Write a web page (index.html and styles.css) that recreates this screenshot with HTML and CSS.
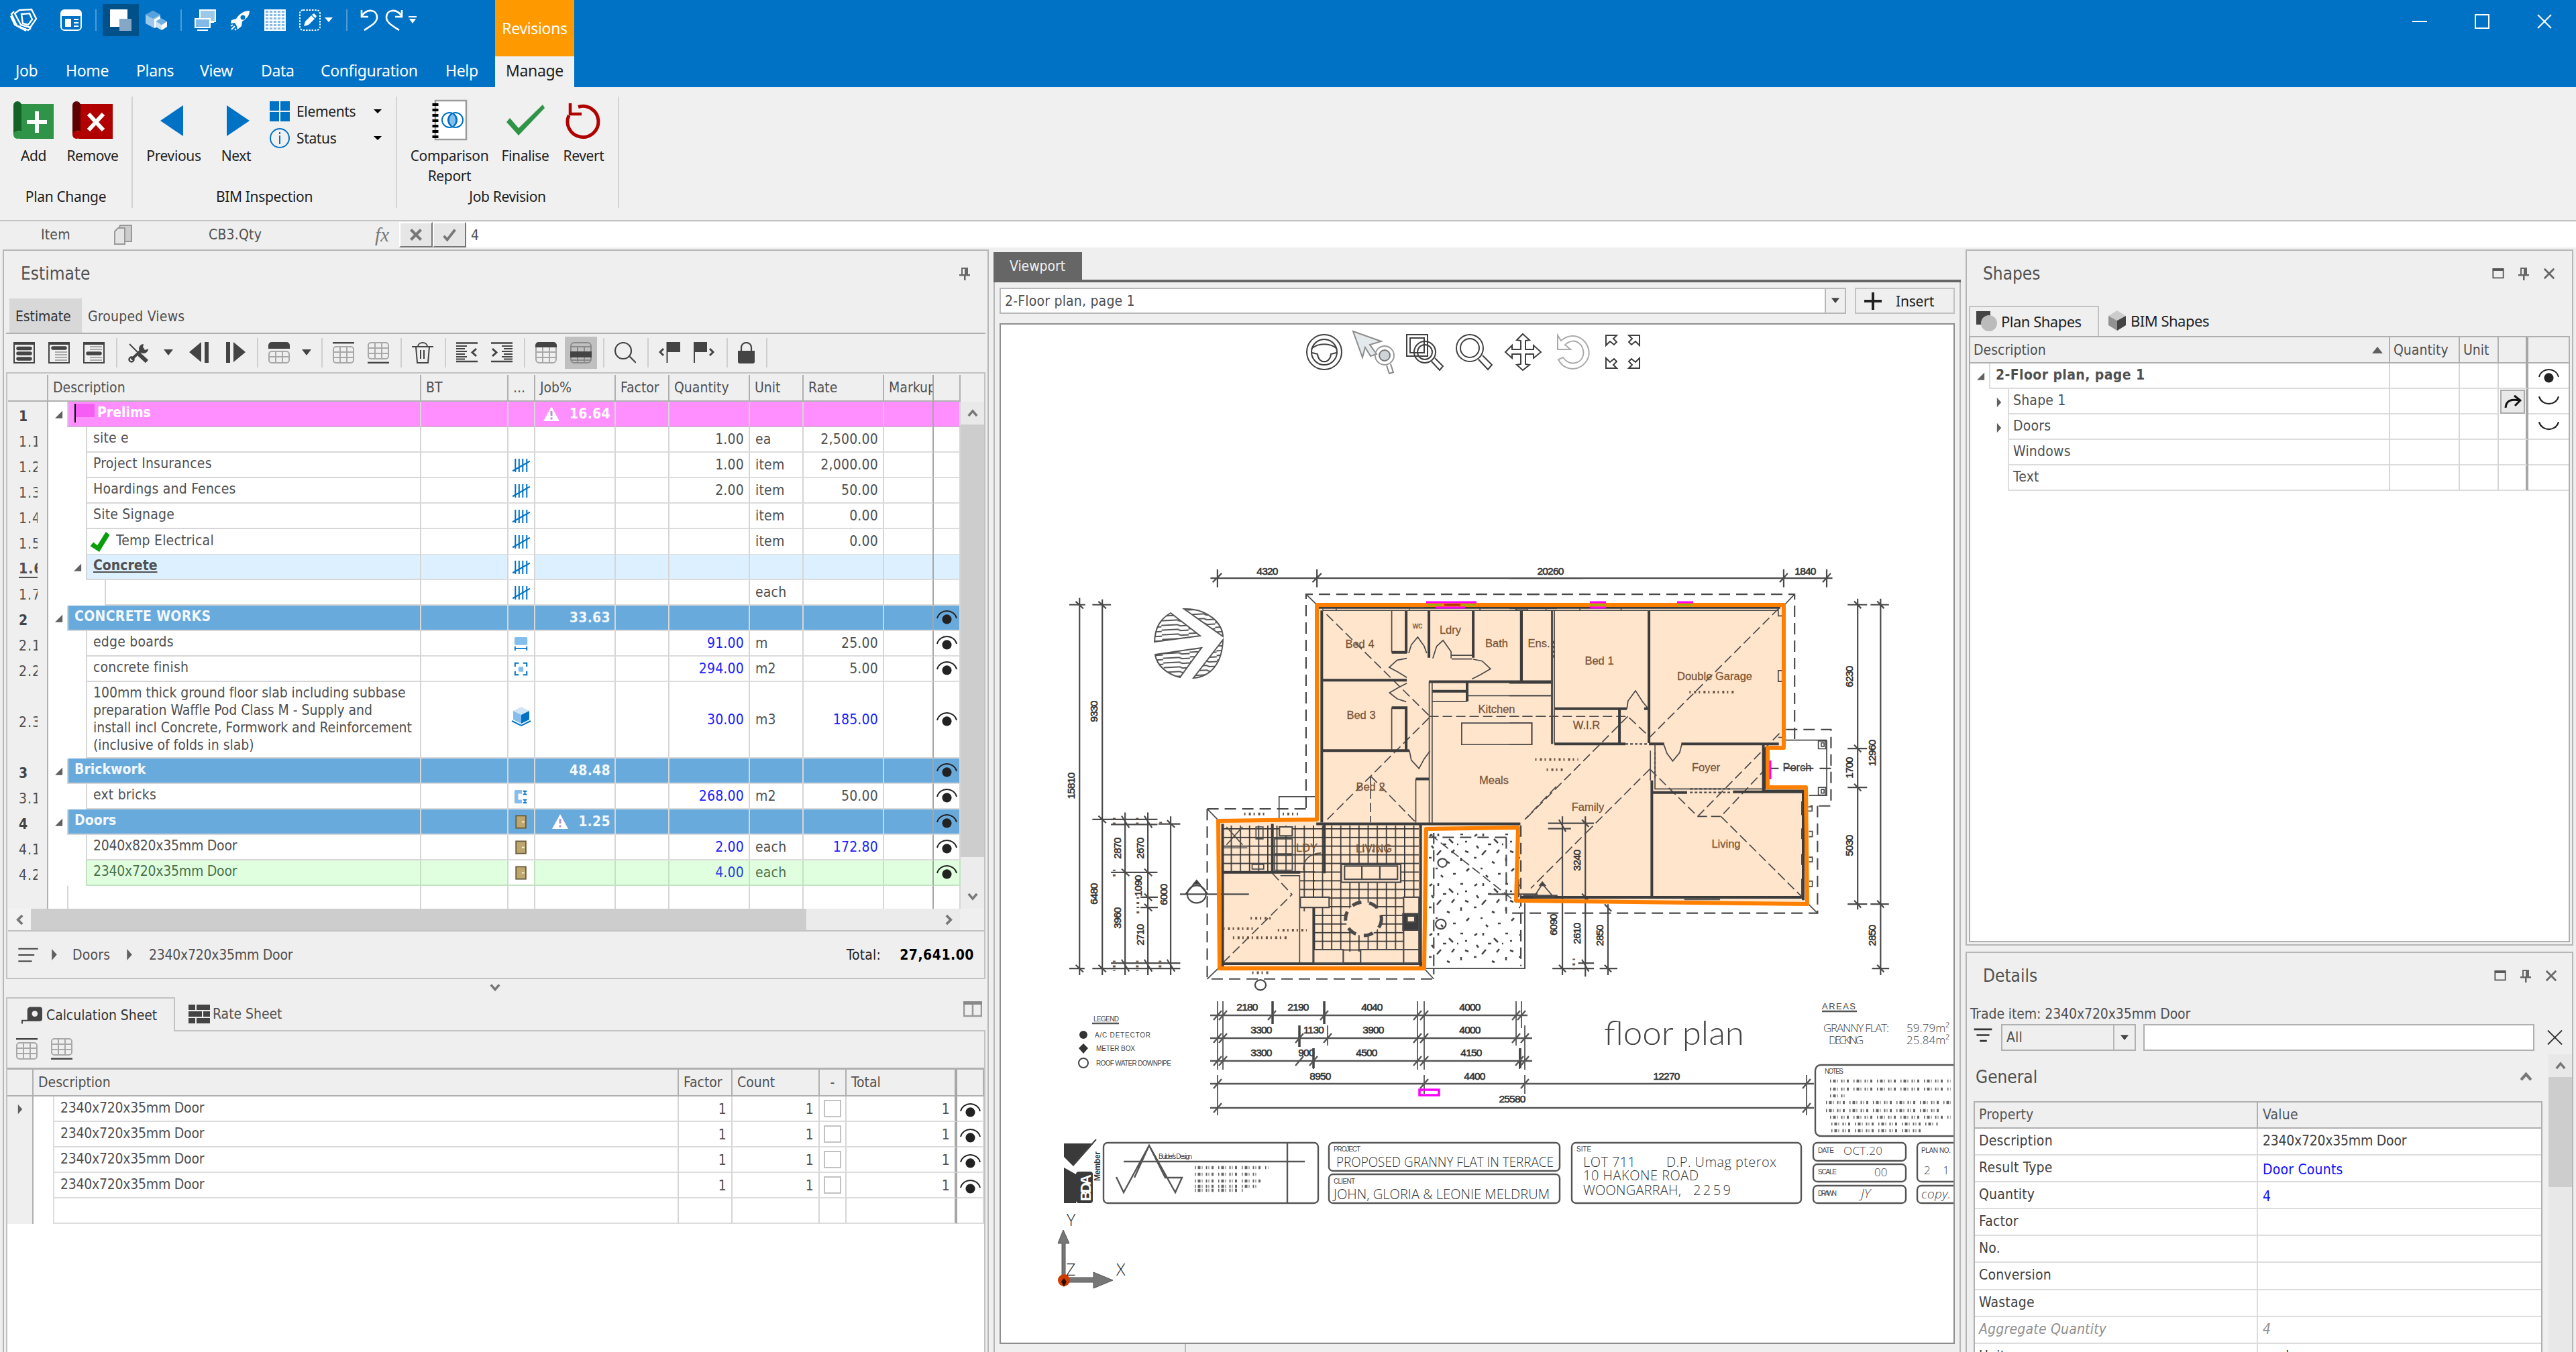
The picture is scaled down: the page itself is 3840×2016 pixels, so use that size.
FILE: index.html
```html
<!DOCTYPE html>
<html lang="en">
<head>
<meta charset="utf-8">
<title>Estimate</title>
<link rel="stylesheet" href="styles.css">
</head>
<body>
<svg class="defs" aria-hidden="true">
  <symbol id="eye" viewBox="0 0 32 21"><path d="M1 12C5-3 27-3 31 12" fill="none" stroke="#222" stroke-width="2"/><circle cx="16" cy="13.500" r="7.300" fill="#222"/></symbol>
  <symbol id="shut" viewBox="0 0 32 21"><path d="M1 3C5 18 27 18 31 3" fill="none" stroke="#222" stroke-width="2.400"/></symbol>
  <symbol id="tally" viewBox="0 0 30 24"><path d="M5.500 1v22M11.500 1v22M17.500 1v22M24 1v22M1 21L29 5" fill="none" stroke="#0072c6" stroke-width="2.200"/></symbol>
  <symbol id="linear" viewBox="0 0 24 24"><rect x="1" y="1" width="21" height="13" rx="2" fill="#83beec"/><path d="M2 16v7M21 16v7M2 19.500h19" stroke="#0072c6" stroke-width="2" fill="none"/></symbol>
  <symbol id="area" viewBox="0 0 24 24"><rect x="7.500" y="8" width="8" height="8" rx="1.500" fill="#83beec"/><path d="M2 8V2h6M15 2h6v6M21 15v6h-6M8 21H2v-6" stroke="#0072c6" stroke-width="2.200" fill="none"/></symbol>
  <symbol id="volume" viewBox="0 0 30 30"><path d="M15 0l12 6-12 6L3 6z" fill="#cfe5f6"/><path d="M3 6l12 6v13L3 19z" fill="#83beec"/><path d="M27 6l-12 6v13l12-6z" fill="#0072c6"/><path d="M1 21l14 7 14-7" fill="none" stroke="#0072c6" stroke-width="2"/></symbol>
  <symbol id="wall" viewBox="0 0 24 24"><path d="M3 1h10v6H7v10h6v6H3a2 2 0 01-2-2V3a2 2 0 012-2z" fill="#83beec"/><path d="M15 3h6M15 8h6M18 3v5M15 17h6M15 22h6M18 17v5" stroke="#0072c6" stroke-width="2" fill="none"/></symbol>
  <symbol id="door" viewBox="0 0 20 24"><rect x="1.500" y="1.500" width="16" height="20" fill="#bda76f" stroke="#6b5d3c" stroke-width="2"/><path d="M11 11.500h4" stroke="#fffbd0" stroke-width="2"/></symbol>
  <symbol id="warn" viewBox="0 0 26 24"><path d="M13 1l12 22H1z" fill="#fff"/><path d="M13 8v7M13 17.500v3" stroke="#b78fd0" stroke-width="3"/></symbol>
  <symbol id="open" viewBox="0 0 14 14"><path d="M13 0v13H0z" fill="#606060"/></symbol>
  <symbol id="fold" viewBox="0 0 10 18"><path d="M1 0l8 9-8 9z" fill="#606060"/></symbol>
  <symbol id="drop" viewBox="0 0 16 10"><path d="M1 0h14L8 9z" fill="#444"/></symbol>
  <symbol id="pin" viewBox="0 0 18 20"><path d="M4 1h10v10h3v2.500H1V11h3zM8 13h2.500v7H8z" fill="#666"/><path d="M6 3h3v8H6z" fill="#efefef"/></symbol>
  <symbol id="max" viewBox="0 0 20 20"><path d="M1.500 2h17v15h-17z" fill="none" stroke="#555" stroke-width="2"/><path d="M1 3.500h18" stroke="#555" stroke-width="4"/></symbol>
  <symbol id="cross" viewBox="0 0 20 20"><path d="M2 2l16 16M18 2L2 18" stroke="#666" stroke-width="3"/></symbol>
  <symbol id="up" viewBox="0 0 18 14"><path d="M2 11l7-8 7 8" fill="none" stroke="#777" stroke-width="4"/></symbol>
  <symbol id="down" viewBox="0 0 18 14"><path d="M2 3l7 8 7-8" fill="none" stroke="#777" stroke-width="4"/></symbol>
  <symbol id="top-row" viewBox="0 0 32 32"><path d="M0 1.200h32" stroke="#444" stroke-width="2.400"/><rect x="1" y="7" width="30" height="24" rx="4" fill="none" stroke="#a8a8a8" stroke-width="2"/><path d="M11 7v24M21 7v24M1 15h30M1 23h30" stroke="#a8a8a8" stroke-width="2"/></symbol>
  <symbol id="end-row" viewBox="0 0 32 32"><path d="M0 30.800h32" stroke="#444" stroke-width="2.400"/><rect x="1" y="1" width="30" height="24" rx="4" fill="none" stroke="#a8a8a8" stroke-width="2"/><path d="M11 1v24M21 1v24M1 9h30M1 17h30" stroke="#a8a8a8" stroke-width="2"/></symbol>
  <symbol id="outdent" viewBox="0 0 32 32"><path d="M0 1.500h32M0 29h32" stroke="#444" stroke-width="2.400"/><path d="M0 6h16M0 10h13M0 14h16M0 18h13M0 22h16M0 25.500h13" stroke="#444" stroke-width="1.800"/><path d="M30 10l-6 5.500 6 5.500" fill="none" stroke="#444" stroke-width="3"/></symbol>
</svg>

<header class="titlebar">
  <div class="bar-left">
    <div class="qat">
      <svg class="logo" viewBox="0 0 42 36" fill="none" stroke="#fff"><path d="M15 3l18-1 7 14-9 13-14-4L8 8z" stroke-width="2.400"/><path d="M18 9l12-1 4 9-6 8-8-2z" stroke-width="2.400"/><path d="M7 5L3 9l8 17 17 7 4-3M2 12l6 13 17 9" stroke-width="2.400"/></svg>
      <svg class="q home" viewBox="0 0 32 32"><rect x="1" y="1" width="30" height="30" rx="5" fill="none" stroke="#fff" stroke-width="2"/><path d="M1 9V6a5 5 0 015-5h20a5 5 0 015 5v4H1zM7 14h9v12H7zM20 14h7v2h-7zM20 19h7v2h-7zM20 24h7v2h-7z" fill="#fff"/></svg>
      <span class="qsep"></span>
      <span class="active"><svg viewBox="0 0 32 32"><path d="M0 0h26v26H0z" fill="#fff"/><path d="M14 14h18v18H14z" fill="#85a6c4"/></svg></span>
      <svg class="q cubes" viewBox="0 0 32 32"><path d="M11 2l11 6v7l-9 4v9L0 21V8z" fill="#9cc8ea"/><path d="M11 2l11 6-11 6L0 8z" fill="#58a1db"/><path d="M22 10l-9 5v13l9-4z" fill="#fff"/><path d="M23 13l9 5-8 5-9-5z" fill="#6fb1e3"/><path d="M15 18l9 5v8l-9-5z" fill="#cbe2f5"/><path d="M32 18l-8 5v8l8-5z" fill="#fff"/></svg>
      <span class="qsep"></span>
      <svg class="q" viewBox="0 0 32 32"><rect x="8" y="1" width="23" height="17" fill="#9cc8ea" stroke="#fff" stroke-width="2"/><rect x="1" y="14" width="22" height="13" fill="#83b9e6" stroke="#fff" stroke-width="2"/><path d="M4 31h16M24 19h5" stroke="#fff" stroke-width="2"/></svg>
      <svg class="q rocket" viewBox="0 0 32 32"><path d="M30 2c-10 0-16 6-20 12l-7 2-1 5 6-1 3 5 1 5 6-5 1-7c6-4 11-8 11-16z" fill="#fff"/><circle cx="20" cy="12" r="3.500" fill="#0072c6"/><path d="M2 25l3-2M3 30l5-5M8 31l2-2" stroke="#fff" stroke-width="2"/></svg>
      <svg class="q" viewBox="0 0 32 32"><path d="M0 0h32v32H0z" fill="#85bbe8"/><path d="M1 1h30v30H1zM7 1v30M13 1v30M19 1v30M25 1v30M1 6h30M1 11h30M1 16h30M1 21h30M1 26h30" fill="none" stroke="#fff" stroke-width="1.800"/></svg>
      <svg class="q" viewBox="0 0 32 32"><rect x="1" y="1" width="30" height="30" rx="5" fill="none" stroke="#fff" stroke-width="2" stroke-dasharray="2.500 1.800"/><path d="M7 25l2-7 9-9 5 5-9 9zM19 8l3-2 4 4-2 3z" fill="#fff"/></svg>
      <svg class="qdrop" viewBox="0 0 12 8"><path d="M0 0h12L6 7z" fill="#fff"/></svg>
      <span class="qsep"></span>
      <svg class="q undo" viewBox="0 0 28 32"><path d="M2 1v10h10M2 10C10-2 25 0 25 12c0 8-10 13-19 19" fill="none" stroke="#fff" stroke-width="2.600"/></svg>
      <svg class="q redo" viewBox="0 0 28 32"><path d="M26 1v10H16M26 10C18-2 3 0 3 12c0 8 10 13 19 19" fill="none" stroke="#fff" stroke-width="2.600"/></svg>
      <svg class="qdrop" viewBox="0 0 12 12"><path d="M0 0h12v2H0zM1 4h10L6 11z" fill="#fff"/></svg>
    </div>
    <nav class="menu"><span>Job</span><span>Home</span><span>Plans</span><span>View</span><span>Data</span><span>Configuration</span><span>Help</span></nav>
  </div>
  <div class="context"><span class="ctx-name">Revisions</span><span class="ctx-tab">Manage</span></div>
  <div class="winctl">
    <svg viewBox="0 0 22 22"><path d="M0 11h22" stroke="#fff" stroke-width="2"/></svg>
    <svg viewBox="0 0 22 22"><path d="M1 1h20v20H1z" fill="none" stroke="#fff" stroke-width="2"/></svg>
    <svg viewBox="0 0 22 22"><path d="M1 1l20 20M21 1L1 21" stroke="#fff" stroke-width="2"/></svg>
  </div>
</header>

<section class="ribbon">
  <div class="group g1">
    <div class="tools">
      <div class="big"><svg viewBox="0 0 60 56"><path d="M9 4h51v52H9z" fill="#2f9348"/><path d="M0 6a6 6 0 0112 0v38H9c-4 0-6 3-6 6L0 50z" fill="#136327"/><circle cx="6" cy="50" r="6" fill="#2f9348"/><path d="M20 31h30M35 15v32" stroke="#fff" stroke-width="6"/></svg><span>Add</span></div>
      <div class="big"><svg viewBox="0 0 60 56"><path d="M9 4h51v52H9z" fill="#b00000"/><path d="M0 6a6 6 0 0112 0v38H9c-4 0-6 3-6 6L0 50z" fill="#5c0000"/><circle cx="6" cy="50" r="6" fill="#b00000"/><path d="M24 19l22 24M46 19L24 43" stroke="#fff" stroke-width="6"/></svg><span>Remove</span></div>
    </div>
    <div class="caption">Plan Change</div>
  </div>
  <div class="group g2">
    <div class="tools">
      <div class="big"><svg viewBox="0 0 60 56"><path d="M44 6v46L10 29z" fill="#0072c6"/></svg><span>Previous</span></div>
      <div class="big"><svg viewBox="0 0 60 56"><path d="M16 6v46l34-23z" fill="#0072c6"/></svg><span>Next</span></div>
      <div class="smalls">
        <div><svg viewBox="0 0 30 30"><path d="M0 0h14v14H0zM16 0h14v14H16zM0 16h14v14H0zM16 16h14v14H16z" fill="#0072c6"/></svg><span>Elements</span><svg class="dd" viewBox="0 0 12 7"><path d="M0 0h12L6 6z"/></svg></div>
        <div><svg viewBox="0 0 30 30"><circle cx="15" cy="15" r="14" fill="none" stroke="#0072c6" stroke-width="2"/><path d="M15 6v3M15 11v13" stroke="#0072c6" stroke-width="2"/></svg><span>Status</span><svg class="dd" viewBox="0 0 12 7"><path d="M0 0h12L6 6z"/></svg></div>
      </div>
    </div>
    <div class="caption">BIM Inspection</div>
  </div>
  <div class="group g3">
    <div class="tools">
      <div class="big"><svg viewBox="0 0 60 56"><rect x="9" y="-1" width="46" height="58" fill="#fff" stroke="#9b9b9b" stroke-width="2.500"/><path d="M9 3v53" stroke="#000" stroke-width="9" stroke-dasharray="4 4"/><circle cx="30" cy="28" r="11" fill="#fff" stroke="#0072c6" stroke-width="2"/><circle cx="39" cy="28" r="11" fill="none" stroke="#0072c6" stroke-width="2"/><path d="M34.500 18a12 12 0 010 20 12 12 0 010-20z" fill="#83beec" stroke="#0072c6" stroke-width="1.500"/></svg><span>Comparison<br>Report</span></div>
      <div class="big"><svg viewBox="0 0 60 56"><path d="M2 31l5-6 13 15L56 5l3 5-39 41z" fill="#2f9348"/></svg><span>Finalise</span></div>
      <div class="big"><svg viewBox="0 0 60 56"><path d="M8 21A23 23 0 1022 8.500" fill="none" stroke="#b00000" stroke-width="5"/><path d="M10 3v16h17" fill="none" stroke="#b00000" stroke-width="4.500"/></svg><span>Revert</span></div>
    </div>
    <div class="caption">Job Revision</div>
  </div>
</section>

<section class="formula">
  <span class="f-item">Item</span>
  <svg class="f-copy" viewBox="0 0 30 30"><path d="M10 1h17v24H15V8H7z" fill="#ccc" stroke="#999" stroke-width="2"/><path d="M2 10l5-5h10v24H2z" fill="#e4e4e4" stroke="#999" stroke-width="2"/></svg>
  <span class="f-ref">CB3.Qty</span>
  <span class="fx">fx</span>
  <span class="f-btn"><svg viewBox="0 0 24 24"><path d="M3 3l18 18M21 3L3 21" stroke="#777" stroke-width="5"/></svg></span>
  <span class="f-btn"><svg viewBox="0 0 24 24"><path d="M2 14l6 7L22 3" fill="none" stroke="#777" stroke-width="4.500"/></svg></span>
  <span class="f-in">4</span>
</section>

<main class="work">
  <section class="panel estimate">
    <div class="ptitle"><span>Estimate</span><svg class="pi"><use href="#pin"/></svg></div>
    <div class="etabs"><span class="on">Estimate</span><span>Grouped Views</span></div>
    <div class="etools">
      <svg viewBox="0 0 32 32"><path d="M1 1h30v30H1z" fill="none" stroke="#444" stroke-width="2"/><path d="M0 2h32" stroke="#444" stroke-width="4"/><path d="M7 9.500h18M7 17h18M7 25h18" stroke="#444" stroke-width="5.500" stroke-linecap="round"/></svg>
      <svg viewBox="0 0 32 32"><path d="M1 1h30v30H1z" fill="none" stroke="#444" stroke-width="2"/><path d="M0 2h32" stroke="#444" stroke-width="4"/><path d="M7 9h18" stroke="#444" stroke-width="5.500" stroke-linecap="round"/><path d="M10 15h18M10 19h18M10 23h18M10 27h18" stroke="#aaa" stroke-width="2"/></svg>
      <svg viewBox="0 0 32 32"><path d="M1 1h30v30H1z" fill="none" stroke="#444" stroke-width="2"/><path d="M0 2h32" stroke="#444" stroke-width="4"/><path d="M7 17h18" stroke="#444" stroke-width="5.500" stroke-linecap="round"/><path d="M10 7h18M10 11h18M10 23h18M10 27h18" stroke="#aaa" stroke-width="2"/></svg>
      <i class="sep"></i>
      <svg viewBox="0 0 32 32"><path d="M3 3l14 14" stroke="#444" stroke-width="2"/><path d="M17 18l12 11" stroke="#444" stroke-width="6"/><path d="M6 26L24 9" stroke="#444" stroke-width="4"/><circle cx="6" cy="26" r="3.500" fill="none" stroke="#444" stroke-width="2.500"/><path d="M24 3a7 7 0 107 7l-5 2-3-4z" fill="#444"/></svg>
      <svg class="arr"><use href="#drop"/></svg>
      <svg viewBox="0 0 32 32"><path d="M18 0v30L0 15zM23 0h6v31h-6z" fill="#444"/></svg>
      <svg viewBox="0 0 32 32"><path d="M14 0v30l18-15zM3 0h6v31H3z" fill="#444"/></svg>
      <i class="sep"></i>
      <svg viewBox="0 0 32 32"><path d="M0 10V5a5 5 0 015-5h22a5 5 0 015 5v5z" fill="#444"/><rect x="1" y="14" width="30" height="17" rx="4" fill="none" stroke="#a8a8a8" stroke-width="2"/><path d="M11 14v17M21 14v17M1 22h30" stroke="#a8a8a8" stroke-width="2"/></svg>
      <svg class="arr tight"><use href="#drop"/></svg>
      <i class="sep"></i>
      <svg><use href="#top-row"/></svg>
      <svg><use href="#end-row"/></svg>
      <i class="sep"></i>
      <svg viewBox="0 0 32 32" fill="none" stroke="#444" stroke-width="2"><path d="M0 7h32M9 7c0-8 14-8 14 0M6 7l2 24h16l2-24M13 12v13M18 12v13"/></svg>
      <i class="sep"></i>
      <svg><use href="#outdent"/></svg>
      <svg viewBox="0 0 32 32"><path d="M0 1.500h32M0 29h32" stroke="#444" stroke-width="2.400"/><path d="M16 6h16M19 10h13M16 14h16M19 18h13M16 22h16M19 25.500h13" stroke="#444" stroke-width="1.800"/><path d="M2 10l6 5.500L2 21" fill="none" stroke="#444" stroke-width="3"/></svg>
      <i class="sep"></i>
      <svg viewBox="0 0 32 32"><rect x="1" y="1" width="30" height="30" rx="5" fill="none" stroke="#a8a8a8" stroke-width="2"/><path d="M11 7v24M21 7v24M1 15h30M1 23h30" stroke="#a8a8a8" stroke-width="2"/><path d="M0 8V5a5 5 0 015-5h22a5 5 0 015 5v3z" fill="#444"/></svg>
      <svg class="sel" viewBox="0 0 32 32"><rect x="1" y="1" width="30" height="30" rx="5" fill="none" stroke="#8a8a8a" stroke-width="2"/><path d="M11 7v24M21 7v24M1 7h30M1 27h30" stroke="#8a8a8a" stroke-width="2"/><path d="M0 14h32v9H0z" fill="#444"/></svg>
      <i class="sep"></i>
      <svg viewBox="0 0 32 32" fill="none" stroke="#444" stroke-width="2.200"><circle cx="13" cy="13" r="12"/><path d="M22 21l10 10"/></svg>
      <i class="sep"></i>
      <svg viewBox="0 0 32 32"><path d="M13 0h19v15H13zM11.500 0h2v31h-2z" fill="#444"/><path d="M7 10l-5 5 5 5" fill="none" stroke="#444" stroke-width="3"/></svg>
      <svg viewBox="0 0 32 32"><path d="M0 0h20v15H0zM0 0h2v31H0z" fill="#444"/><path d="M24 10l5 5-5 5" fill="none" stroke="#444" stroke-width="3"/></svg>
      <i class="sep"></i>
      <svg class="lock" viewBox="0 0 25 32"><path d="M0 13h25v16a3 3 0 01-3 3H3a3 3 0 01-3-3z" fill="#444"/><path d="M5 14V8a7.500 7 0 0115 0v6" fill="none" stroke="#444" stroke-width="2.200"/></svg>
      <i class="sep"></i>
    </div>
    <div class="ebox">
      <div class="egrid">
        <div class="rows">
          <div class="er head"><span></span><span>Description</span><span>BT</span><span>...</span><span>Job%</span><span>Factor</span><span>Quantity</span><span>Unit</span><span>Rate</span><span class="cut">Markup</span><span></span></div>
          <div class="er l0 pink"><b class="no"><s>1</s></b><span class="desc"><svg class="tog"><use href="#open"/></svg><b class="nm"><em class="caret"></em>Prelims</b></span><i></i><i></i><b class="job"><svg><use href="#warn"/></svg>16.64</b><i></i><i></i><i></i><i></i><i></i><i></i></div>
          <div class="er l1"><span class="no"><s>1.1</s></span><span class="desc"><span class="nm">site e</span></span><i></i><i></i><i></i><i></i><span class="n">1.00</span><span class="u">ea</span><span class="n">2,500.00</span><i></i><i></i></div>
          <div class="er l1"><span class="no"><s>1.2</s></span><span class="desc"><span class="nm">Project Insurances</span></span><i></i><i><svg class="ty"><use href="#tally"/></svg></i><i></i><i></i><span class="n">1.00</span><span class="u">item</span><span class="n">2,000.00</span><i></i><i></i></div>
          <div class="er l1"><span class="no"><s>1.3</s></span><span class="desc"><span class="nm">Hoardings and Fences</span></span><i></i><i><svg class="ty"><use href="#tally"/></svg></i><i></i><i></i><span class="n">2.00</span><span class="u">item</span><span class="n">50.00</span><i></i><i></i></div>
          <div class="er l1"><span class="no"><s>1.4</s></span><span class="desc"><span class="nm">Site Signage</span></span><i></i><i><svg class="ty"><use href="#tally"/></svg></i><i></i><i></i><i></i><span class="u">item</span><span class="n">0.00</span><i></i><i></i></div>
          <div class="er l1"><span class="no"><s>1.5</s></span><span class="desc"><span class="nm"><svg class="tick" viewBox="0 0 30 32"><path d="M0 22l5-6 6 5L24 0l6 5-16 26z" fill="#0a9e0a"/></svg>Temp Electrical</span></span><i></i><i><svg class="ty"><use href="#tally"/></svg></i><i></i><i></i><i></i><span class="u">item</span><span class="n">0.00</span><i></i><i></i></div>
          <div class="er l1 sky"><b class="no"><s class="ul">1.6</s></b><span class="desc"><svg class="tog"><use href="#open"/></svg><b class="nm"><u>Concrete</u></b></span><i></i><i class="white"><svg class="ty"><use href="#tally"/></svg></i><i></i><i></i><i></i><i></i><i></i><i></i><i></i></div>
          <div class="er l2"><span class="no"><s>1.7</s></span><span class="desc"><span class="nm"></span></span><i></i><i><svg class="ty"><use href="#tally"/></svg></i><i></i><i></i><i></i><span class="u">each</span><i></i><i></i><i></i></div>
          <div class="er l0 blue"><b class="no"><s>2</s></b><span class="desc"><svg class="tog"><use href="#open"/></svg><b class="nm caps">CONCRETE WORKS</b></span><i></i><i></i><b class="job">33.63</b><i></i><i></i><i></i><i></i><i></i><i><svg class="ey"><use href="#eye"/></svg></i></div>
          <div class="er l1"><span class="no"><s>2.1</s></span><span class="desc"><span class="nm">edge boards</span></span><i></i><i><svg class="ty"><use href="#linear"/></svg></i><i></i><i></i><span class="n lk">91.00</span><span class="u">m</span><span class="n">25.00</span><i></i><i><svg class="ey"><use href="#eye"/></svg></i></div>
          <div class="er l1"><span class="no"><s>2.2</s></span><span class="desc"><span class="nm">concrete finish</span></span><i></i><i><svg class="ty"><use href="#area"/></svg></i><i></i><i></i><span class="n lk">294.00</span><span class="u">m2</span><span class="n">5.00</span><i></i><i><svg class="ey"><use href="#eye"/></svg></i></div>
          <div class="er l1 tall"><span class="no"><s>2.3</s></span><span class="desc"><span class="nm">100mm thick ground floor slab including subbase<br>preparation Waffle Pod Class M - Supply and<br>install incl Concrete, Formwork and Reinforcement<br>(inclusive of folds in slab)</span></span><i></i><i><svg class="vol"><use href="#volume"/></svg></i><i></i><i></i><span class="n lk">30.00</span><span class="u">m3</span><span class="n lk">185.00</span><i></i><i><svg class="ey"><use href="#eye"/></svg></i></div>
          <div class="er l0 blue"><b class="no"><s>3</s></b><span class="desc"><svg class="tog"><use href="#open"/></svg><b class="nm">Brickwork</b></span><i></i><i></i><b class="job">48.48</b><i></i><i></i><i></i><i></i><i></i><i><svg class="ey"><use href="#eye"/></svg></i></div>
          <div class="er l1"><span class="no"><s>3.1</s></span><span class="desc"><span class="nm">ext bricks</span></span><i></i><i><svg class="ty"><use href="#wall"/></svg></i><i></i><i></i><span class="n lk">268.00</span><span class="u">m2</span><span class="n">50.00</span><i></i><i><svg class="ey"><use href="#eye"/></svg></i></div>
          <div class="er l0 blue"><b class="no"><s>4</s></b><span class="desc"><svg class="tog"><use href="#open"/></svg><b class="nm">Doors</b></span><i></i><i><svg class="ty"><use href="#door"/></svg></i><b class="job"><svg><use href="#warn"/></svg>1.25</b><i></i><i></i><i></i><i></i><i></i><i><svg class="ey"><use href="#eye"/></svg></i></div>
          <div class="er l1"><span class="no"><s>4.1</s></span><span class="desc"><span class="nm code">2040x820x35mm Door</span></span><i></i><i><svg class="ty"><use href="#door"/></svg></i><i></i><i></i><span class="n lk">2.00</span><span class="u">each</span><span class="n lk">172.80</span><i></i><i><svg class="ey"><use href="#eye"/></svg></i></div>
          <div class="er l1 green"><span class="no"><s>4.2</s></span><span class="desc"><span class="nm code">2340x720x35mm Door</span></span><i></i><i><svg class="ty"><use href="#door"/></svg></i><i></i><i></i><span class="n lk">4.00</span><span class="u">each</span><i></i><i></i><i><svg class="ey"><use href="#eye"/></svg></i></div>
          <div class="er l0 last"><span class="no"></span><span class="desc"><span class="nm"></span></span><i></i><i></i><i></i><i></i><i></i><i></i><i></i><i></i><i></i></div>
        </div>
        <div class="vscroll"><span class="btn"><svg><use href="#up"/></svg></span><span class="thumb"></span><span class="rest"><svg><use href="#down"/></svg></span></div>
      </div>
      <div class="hscroll"><span class="btn"><svg viewBox="0 0 14 18"><path d="M11 2L4 9l7 7" fill="none" stroke="#777" stroke-width="4"/></svg></span><span class="thumb"></span><span class="rest"><svg viewBox="0 0 14 18"><path d="M3 2l7 7-7 7" fill="none" stroke="#777" stroke-width="4"/></svg></span></div>
      <div class="crumbs">
        <svg class="burger" viewBox="0 0 32 24"><path d="M0 2h32M0 12h26M0 22h22" stroke="#444" stroke-width="2.200"/></svg>
        <svg class="cr"><use href="#fold"/></svg><span class="c1">Doors</span>
        <svg class="cr"><use href="#fold"/></svg><span class="c2 code">2340x720x35mm Door</span>
        <span class="tl">Total:</span><b>27,641.00</b>
      </div>
    </div>
    <div class="splitter"><svg><use href="#down"/></svg></div>
    <div class="ctabs">
      <span class="on"><svg viewBox="0 0 32 26"><path d="M14 0h14a4 4 0 014 4v14a4 4 0 01-4 4H2v4H0v-6h9V5a5 5 0 015-5z" fill="#444"/><circle cx="20.500" cy="10.500" r="4.500" fill="#efefef"/></svg>Calculation Sheet</span>
      <span class="off"><svg viewBox="0 0 32 28"><path d="M0 0h10v8H0zM12 0h20v8H12zM0 10h20v8H0zM22 10h10v8H22zM0 20h10v8H0zM12 20h20v8H12z" fill="#444"/></svg>Rate Sheet<svg class="lay" viewBox="0 0 28 24"><path d="M1 2h26v20H1zM14 4v18" fill="none" stroke="#999" stroke-width="2.500"/><path d="M0 2.500h28" stroke="#888" stroke-width="5"/></svg></span>
    </div>
    <div class="cbox">
      <div class="ctools"><svg><use href="#top-row"/></svg><svg><use href="#end-row"/></svg></div>
      <div class="cr-row chead"><span></span><span>Description</span><span>Factor</span><span>Count</span><span class="mid">-</span><span>Total</span><span></span></div>
      <div class="cr-row"><span class="lead"><svg><use href="#fold"/></svg></span><span class="d"><span>2340x720x35mm Door</span></span><span>1</span><span>1</span><span class="mid"><em></em></span><span>1</span><span class="ec"><svg class="ey"><use href="#eye"/></svg></span></div>
      <div class="cr-row"><span class="lead"></span><span class="d"><span>2340x720x35mm Door</span></span><span>1</span><span>1</span><span class="mid"><em></em></span><span>1</span><span class="ec"><svg class="ey"><use href="#eye"/></svg></span></div>
      <div class="cr-row"><span class="lead"></span><span class="d"><span>2340x720x35mm Door</span></span><span>1</span><span>1</span><span class="mid"><em></em></span><span>1</span><span class="ec"><svg class="ey"><use href="#eye"/></svg></span></div>
      <div class="cr-row"><span class="lead"></span><span class="d"><span>2340x720x35mm Door</span></span><span>1</span><span>1</span><span class="mid"><em></em></span><span>1</span><span class="ec"><svg class="ey"><use href="#eye"/></svg></span></div>
      <div class="cr-row"><span class="lead"></span><span class="d"><span></span></span><span></span><span></span><span></span><span></span><span></span></div>
      <div class="blank"></div>
    </div>
  </section>

  <section class="viewport">
    <div class="vtabs"><span>Viewport</span></div>
    <div class="vbody">
      <div class="vbar"><div class="combo"><span>2-Floor plan, page 1</span><i><svg><use href="#drop"/></svg></i></div><div class="insert"><svg viewBox="0 0 26 26"><path d="M13 0v26M0 13h26" stroke="#222" stroke-width="4"/></svg>Insert</div></div>
      <div class="canvas">
<svg viewBox="1492 485 1420 1518" class="plan">
  <defs>
    <pattern id="tile" x="1957" y="1236" width="13.600" height="12.900" patternUnits="userSpaceOnUse"><path d="M0 0h13.600M0 0v12.900" stroke="#333" stroke-width="3.400" fill="none"/></pattern>
    <pattern id="hatch" width="40" height="7" patternUnits="userSpaceOnUse" patternTransform="rotate(-3)"><path d="M0 1h24l4 2h12" stroke="#555" stroke-width="2" fill="none"/></pattern>
    <pattern id="gravel" x="2126" y="1240" width="67" height="74" patternUnits="userSpaceOnUse"><path d="M5 8l4-3M18 4v4M34 12l6 6M51 5h4M8 22l3 4M25 20h5M42 28l-4 5M4 40h4M16 36l6-7M31 46l4 2M52 40v5M14 56h3M58 16h3M46 20h2M60 60l4-4M40 64h4M22 66l3 3M58 30l5 2" stroke="#444" stroke-width="2.600" fill="none"/></pattern>
  </defs>
  <path d="M1963 903V1223L1816 1225 1818 1445H2123L2126 1237 2263 1235 2260 1344 2694 1349 2692 1175H2635V1116H2659V903Z" fill="#ffe5cc"/>
  <g fill="url(#tile)"><path d="M1824 1232h74v69h-74zM1898 1232h60v69h-60z"/><path d="M1957 1232h158v188h-158z"/><path d="M1938 1300h22v60h-22z"/></g>
  <path d="M2130 1244h136v196h-136z" fill="url(#gravel)"/>
  <g fill="url(#hatch)" stroke="#555" stroke-width="2"><path d="M1745 915L1789 949 1721 958C1722 938 1728 925 1745 915zM1765 909C1800 908 1822 930 1823 950zM1722 977L1791 967 1759 1011C1738 1006 1724 992 1722 977zM1823 955C1822 990 1805 1010 1779 1012z"/></g>
  <g class="ink" transform="translate(1570 830) scale(.4783 .4464)">
    <path d="M490 74H1650M512 45v60M822 45v60M497 88l28-30M808 88l28-30M82 140v1260M153 145v1255M50 163h50M122 163h58M50 1378h48M122 1378h60M122 880h60M70 152l24 24M141 152l24 24M70 1366l24 24M141 1366l24 24M141 868l24 24"/>
    <path d="M224 857v543M295 857v543M366 870v530M180 880h145M180 897h145M328 895h68M180 1057h145M272 1140h54M272 1174h54M180 1360h216M180 1378h216M213 868l24 40M284 868l24 40M355 883l24 24M213 1045l24 24M284 1045l24 24M284 1128l24 24M284 1162l24 24M213 1348l24 40M284 1348l24 40M355 1348l24 40"/>
    <path class="fine" d="M190 875v30M262 875v30M335 888v14M190 1048v22M264 1140v56M190 1352v34M262 1352v34M333 1352v30"/>
    <path class="dash" d="M1570 128H788V845M480 845H788M480 845V1413H1186V1378M1186 1370V925M1412 940H1170M1412 940V1195"/>
    <path class="thin" d="M788 128l34 35M480 845l32 35M480 1413l34-35M1186 1413l-30-35M704 880V804H822M1158 1378H1470V1160"/>
    <path class="dash thin" d="M852 195L1175 537 845 890M989 735L1130 890M989 735V890M1172 536H1570M530 1358L745 1130M683 1060l62 72M1175 930l260 220M1568 770L1470 880"/>
    <path class="wall" d="M822 172H1570M837 182V890M837 415H1102M837 650H1110M1100 182V325M1171 182V340M1309 182V340M1459 182V418M1171 420H1556M1290 420V486M1055 322H1102M1055 507H1100V650M1130 745h42M1180 452h108M820 895H1456M1145 895V1378M528 895V1375M520 1362H1150M683 895V1057M530 1057H770M845 895V1060M812 1170V1360"/>
    <path class="thin" d="M1055 182V322M1055 507V648M1130 745V893M1172 420V893M1181 420V893M1556 182V628M1290 467H1556M1181 486h108M1242 332h64M1242 344h64M1273 558H1492V630H1273zM768 1130V1360M708 1068h60v105h90M840 182H1570M840 172v8M882 172v10h126M1110 180v-8h45M1330 172v10h112v-8"/>
    <path class="thin" d="M1108 325l8-28 20-26 20 30 8 24M1183 342l12-40 20-20 25 38v22M1102 342l-30 6-25 24 28 16 27 18M1102 425l-28 16-26 16 24 20 28 10M1309 345l28 6 26 26-32 20-26 14M1110 650l6 32 24 28 16-32 18-26"/>
    <path d="M705 905h40v30h-40zM770 1140h90v34h-90z" fill="#ffe5cc"/>
    <path d="M898 1030h185v60H898zM908 1036h165v44H908zM962 1036v44M1018 1036v44" fill="#ffe5cc"/>
    <path d="M812 1315h92v45h-92zM958 1315h182v45H958zM1092 1140h48v220h-48z" fill="#ffe5cc"/>
    <circle cx="967" cy="1212" r="56" fill="#ffe5cc" class="round"/>
    <path d="M1090 1195h50v55h-50z" fill="#3c3c3c"/><path d="M1103 1203h24v20h-24z" fill="#ffe5cc"/>
    <path d="M540 905l50 60M590 905l-50 60M530 975h75M632 905h22v40h-22zM620 1030h36v16h-36zM690 945h55v50h-55zM690 1000h55v50h-55zM780 1050c0-40 20-55 55-58" class="thin"/>
    <path d="M395 1130H610M1360 1130h150M412 1130l35-44 35 44z"/><circle cx="447" cy="1130" r="29" fill="none"/><path d="M438 1096l9-12 9 12z" fill="#333"/>
    <circle cx="1213" cy="1025" r="14" fill="none"/><circle cx="1208" cy="1230" r="16" fill="none"/><circle cx="646" cy="1433" r="17" fill="none"/>
    <path class="fine" d="M595 862h70M715 862h48M620 1392h58M560 1275h170M615 1210h70M700 1250h90M530 1245h100M965 985h80"/>
  </g>
  <g class="ink" transform="translate(2250 830) scale(.4273 .4464)">
    <path d="M0 74H1127M957 45v60M1107 45v60M943 88l28-30M1093 88l28-30M1215 143v1038M1295 143v1257M1180 163h68M1260 163h64M1180 643h68M1180 773h68M1180 1163h68M1260 1163h64M1265 1378h60M1203 151l24 24M1283 151l24 24M1203 631l24 24M1203 761l24 24M1203 1151l24 24M1283 1151l24 24M1283 1366l24 24"/>
    <path d="M185 870v530M265 870v535M344 1163v237M135 893h160M135 911h80M150 1378h145M315 1378h62M240 1360h55M173 881l24 40M253 881l24 24M253 1348l24 40M332 1163l24 24M332 1366l24 24M173 1366l24 24M253 1128l24 24"/>
    <path class="dash" d="M0 128H995V615M965 580H1122V835H1050M1075 835V1193H0M1122 710H910M40 900V1370"/>
    <path class="thin" d="M995 128l-35 35M1107 615H960M1107 615V800H1045M1078 618h26v26h-26zM1078 773h26v26h-26zM1088 624h10v12h-10zM1088 780h10v12h-10zM1042 838h14v14h-14M1045 920h12v18h-12M1045 1006h12v16h-12M1045 1086h12v18h-12M1075 1193l-32-30M54 1160V1378"/>
    <path class="dash thin" d="M940 175L490 605 413 536H0M413 536L55 880M490 712L285 908M285 908L75 1110M490 712L657 870 950 585M657 870H738L885 720M738 870L1022 1140"/>
    <path class="wall" d="M0 172H945M42 182V420M0 422h148M157 510H410M157 628H405M384 510V628M487 182V625M470 510h16M487 628H540M600 628H940M886 628V785M497 750V1140M497 790H620M780 788H1030M1025 785V1150M30 1080V1140M40 1140H1025"/>
    <path class="thin" d="M147 182V628M157 182V628M0 182H940M25 172v8h38v-8M128 172v10h118v-8M390 172v10M0 467H148M0 558H78V630H0M508 628V778H886M508 778H780M938 172v28h14M938 383h14v36h-14zM938 606h18M410 510l4-26 26-34 24 36 22 26M538 628l12 32 20 25 24-28 8-30M492 650V750M1020 820v46M1030 820v46M1020 910v36M1020 996v36M1020 1078v60M610 1148h125"/>
    <path class="dash2" d="M508 655V750M630 778H770M630 790H770M405 628H480M155 284v60"/>
    <path class="thin" d="M85 1140l30-44 40 44zM48 1134h120"/><path d="M107 1100l8-10 9 10z" fill="#333"/>
    <path class="wall" d="M890 640V780M888 785H1030"/>
    <path class="fine" d="M628 455H790M90 680h150M130 714h60M225 1345v44"/>
  </g>
  <path d="M1963 903V1223L1816 1225 1818 1445H2123L2126 1237 2263 1235 2260 1344 2694 1349 2692 1175H2635V1116H2659V903Z" fill="none" stroke="#ff8000" stroke-width="6" stroke-linejoin="round"/>
  <path d="M2126 899h75M2140 907h44M2370 899h24M2370 907h24M2500 899h24M2639 1135v28" stroke="#f0f" stroke-width="3" fill="none"/><path d="M2128 903h20M2180 903h20M2370 903h24M2500 903h24" stroke="#8db600" stroke-width="2"/><path d="M2153 903h24" stroke="#a33c00" stroke-width="3"/>
  <g class="room">
    <text x="2027" y="967">Bed 4</text><text x="2029" y="1073">Bed 3</text><text x="2043" y="1180">Bed 2</text><text x="2113" y="938" class="tiny">wc</text><text x="2162" y="946">Ldry</text><text x="2231" y="966">Bath</text><text x="2294" y="966">Ens.</text><text x="2231" y="1064">Kitchen</text><text x="2227" y="1170">Meals</text><text x="2384" y="992">Bed 1</text><text x="2556" y="1015" textLength="112">Double Garage</text><text x="2365" y="1088">W.I.R</text><text x="2543" y="1151">Foyer</text><text x="2679" y="1151" class="dk">Porch</text><text x="2367" y="1210">Family</text><text x="2573" y="1265">Living</text><text x="2048" y="1272">LIVING</text><text x="1948" y="1271">LDY</text>
  </g>
  <g class="dim">
    <text x="1889" y="858">4320</text><text x="2311" y="858">20260</text><text x="2691" y="858">1840</text>
    <text transform="translate(1636 1062) rotate(-90)">9330</text><text transform="translate(1602 1173) rotate(-90)">15810</text><text transform="translate(1636 1334) rotate(-90)">6480</text><text transform="translate(1671 1266) rotate(-90)">2870</text><text transform="translate(1705 1266) rotate(-90)">2670</text><text transform="translate(1671 1370) rotate(-90)">3960</text><text transform="translate(1702 1322) rotate(-90)">1090</text><text transform="translate(1705 1395) rotate(-90)">2710</text><text transform="translate(1740 1335) rotate(-90)">6000</text>
    <text transform="translate(2762 1010) rotate(-90)">6230</text><text transform="translate(2762 1146) rotate(-90)">1700</text><text transform="translate(2796 1124) rotate(-90)">12960</text><text transform="translate(2762 1262) rotate(-90)">5030</text><text transform="translate(2796 1396) rotate(-90)">2850</text><text transform="translate(2356 1284) rotate(-90)">3240</text><text transform="translate(2321 1380) rotate(-90)">6090</text><text transform="translate(2356 1393) rotate(-90)">2610</text><text transform="translate(2390 1396) rotate(-90)">2850</text>
    <text x="1859" y="1508">2180</text><text x="1935" y="1508">2190</text><text x="2045" y="1508">4040</text><text x="2191" y="1508">4000</text>
    <text x="1880" y="1542">3300</text><text x="1958" y="1542">1130</text><text x="2047" y="1542">3900</text><text x="2191" y="1542">4000</text>
    <text x="1880" y="1576">3300</text><text x="1947" y="1576">900</text><text x="2037" y="1576">4500</text><text x="2193" y="1576">4150</text>
    <text x="1968" y="1611">8950</text><text x="2198" y="1611">4400</text><text x="2484" y="1611">12270</text><text x="2254" y="1645">25580</text>
  </g>
  <g stroke="#555" stroke-width="2.400" fill="none">
    <path d="M1804 1515h473M1804 1549h480M1804 1583h480M1804 1617h900M1804 1653h900"/>
    <path d="M1815 1494v102M1823 1494v102M2113 1494v102M2123 1494v102M2260 1494v40M2268 1494v40M2260 1530v30M2273 1530v66M1958 1565v30M2265 1565v30M1979 1530v30M1815 1604v60M2123 1604v28M2273 1604v28M2693 1604v60" stroke-width="1.800"/>
    <path d="M1897 1494v34M1974 1494v34M1937 1530v32M1958 1564v30M2266 1564v30" stroke-width="3.500" stroke="#444"/>
    <path d="M1809 1522l12-14M1817 1522l12-14M1890 1522l12-14M1968 1522l12-14M2107 1522l12-14M2117 1522l12-14M2254 1522l12-14M2262 1522l12-14M1809 1556l12-14M1817 1556l12-14M1931 1556l12-14M1973 1556l12-14M2107 1556l12-14M2117 1556l12-14M2254 1556l12-14M2267 1556l12-14M1809 1590l12-14M1817 1590l12-14M1931 1590l12-14M1952 1590l12-14M2107 1590l12-14M2117 1590l12-14M2259 1590l12-14M2267 1590l12-14M1809 1624l12-14M2117 1624l12-14M2267 1624l12-14M2687 1624l12-14M1809 1660l12-14M2687 1660l12-14"/>
  </g>
  <rect x="2116" y="1626" width="29" height="8" fill="none" stroke="#f0f" stroke-width="3.500"/>
  <text x="2391" y="1559" class="fp" textLength="209" lengthAdjust="spacingAndGlyphs">floor plan</text>
  <g class="note">
    <text x="1630" y="1524" textLength="38">LEGEND</text><path d="M1628 1527h40"/><text x="1632" y="1548" textLength="83">A/C DETECTOR</text><text x="1634" y="1568" textLength="58">METER BOX</text><text x="1634" y="1590" textLength="112">ROOF WATER DOWNPIPE</text>
    <text x="2716" y="1506" class="h" textLength="50">AREAS</text><path d="M2716 1509h52"/>
    <text x="2718" y="1540" class="m" textLength="98">GRANNY FLAT:</text><text x="2842" y="1540" class="m" textLength="64">59.79m²</text><text x="2726" y="1558" class="m" textLength="52">DECKING</text><text x="2842" y="1558" class="m" textLength="64">25.84m²</text>
    <text x="2720" y="1602" textLength="28">NOTES</text>
    <text x="1727" y="1729" textLength="50">Builder's Design</text><text x="1988" y="1718" textLength="40">PROJECT</text><text x="1988" y="1766" textLength="32">CLIENT</text><text x="2350" y="1718">SITE</text>
    <text x="2710" y="1720" textLength="24">DATE</text><text x="2710" y="1752" textLength="28">SCALE</text><text x="2710" y="1784" textLength="28">DRAWN</text><text x="2864" y="1720" textLength="44">PLAN NO.</text>
    <text x="2748" y="1723" class="m" textLength="58">OCT.20</text><text x="2794" y="1755" class="m">00</text><text x="2774" y="1787" class="m it">JY</text><text x="2868" y="1752" class="m">2</text><text x="2896" y="1752" class="m">1</text><text x="2864" y="1788" class="m it" textLength="44">copy.</text>
    <text x="1992" y="1741" class="l" textLength="324" lengthAdjust="spacingAndGlyphs">PROPOSED GRANNY FLAT IN TERRACE</text><text x="1988" y="1789" class="l" textLength="322" lengthAdjust="spacingAndGlyphs">JOHN, GLORIA &amp; LEONIE MELDRUM</text>
    <text x="2360" y="1741" class="l" textLength="78">LOT 711</text><text x="2484" y="1741" class="l" textLength="164">D.P. Umag pterox</text><text x="2360" y="1761" class="l" textLength="172">10 HAKONE ROAD</text><text x="2360" y="1783" class="l" textLength="146">WOONGARRAH,</text><text x="2524" y="1783" class="l" textLength="56">2259</text>
  </g>
  <circle cx="1615" cy="1544" r="6" fill="#333"/><path d="M1615 1557l7 7-7 8-7-8z" fill="#333"/><circle cx="1615" cy="1586" r="7" fill="none" stroke="#444" stroke-width="2"/>
  <path d="M2728 1613h180M2728 1625h180M2728 1635h24M2722 1645h186M2722 1657h174M2728 1667h180M2730 1677h160M2730 1687h135M1781 1742h110M1781 1752h94M1781 1762h104M1781 1770h94M1781 1776h74" stroke="#666" stroke-width="4.500" stroke-dasharray="1.500 3 4 2 1 5 2 2 1 3.500 3 7" fill="none"/>
  <g fill="none" stroke="#555" stroke-width="2.400"><path d="M2914 1589H2714a8 8 0 00-8 8v90a8 8 0 008 8h200"/><rect x="1645" y="1705" width="320" height="90" rx="6"/><rect x="1981" y="1705" width="344" height="42" rx="6"/><rect x="1981" y="1752" width="344" height="43" rx="6"/><rect x="2343" y="1705" width="342" height="90" rx="6"/><rect x="2703" y="1705" width="138" height="27" rx="6"/><rect x="2703" y="1737" width="138" height="26" rx="6"/><rect x="2703" y="1769" width="138" height="26" rx="6"/><rect x="2858" y="1705" width="70" height="58" rx="6"/><rect x="2858" y="1769" width="70" height="26" rx="6"/><path d="M1919 1705v90M1675 1733h270M1664 1756l11 23 38-70 39 70 10-22h-25l-24-48-22 48"/></g>
  <path d="M1586 1706h44l-30 34-14-14zM1586 1742l18 10v43h-18z" fill="#3a3a3a"/><path d="M1600 1738l34-38" stroke="#444" stroke-width="2"/><rect x="1604" y="1748" width="25" height="47" rx="4" fill="#3a3a3a"/>
  <text class="bda" transform="translate(1626 1792) rotate(-90)" textLength="40">BDA</text><text class="mem" transform="translate(1640 1762) rotate(-90)" textLength="44">Member</text>
  <g><path d="M1583 1905v-50h-6l8-20 9 20h-6v50zM1590 1906h40v-8l29 12-29 12v-9h-40z" fill="#777" stroke="#555"/><circle cx="1586" cy="1910" r="9" fill="#d13c00"/><path d="M1582 1912l4-5 4 5-4 8z" fill="#2b0b00"/><text class="ax" x="1590" y="1829">Y</text><text class="ax" x="1664" y="1903">X</text><text class="ax" x="1589" y="1903">Z</text></g>
  <g fill="none" stroke="#3f3f3f" stroke-width="2">
    <circle cx="1974" cy="526" r="26"/><circle cx="1974" cy="526" r="19"/><path d="M1955 521c10-9 28-9 38 0M1956 527l8 2c1 15 19 15 20 0l8-2"/>
    <path d="M2017 495l42 15-17 5 10 14-9 3-8-13-4 15z" fill="#e4e9ec" stroke="#8d8d8d"/><circle cx="2064" cy="531" r="14" stroke="#999"/><circle cx="2064" cy="531" r="8" fill="#cdd5da" stroke="#777"/><path d="M2067 546l4 12 6-2-4-12" stroke="#888"/>
    <path d="M2097 500h31v32h-31zM2102 505h21v22h-21z"/><circle cx="2124" cy="526" r="16"/><circle cx="2124" cy="526" r="11"/><path d="M2134 540l12 13 5-6-12-12"/>
    <circle cx="2191" cy="520" r="20"/><circle cx="2191" cy="520" r="14"/><path d="M2204 537l14 15 6-7-14-14"/>
    <path d="M2270 499l10 9-6 1v13h12v-6l11 10-11 9v-6h-12v15l6 1-10 8-9-8 6-1v-15h-13v6l-10-9 10-10v6h13v-13l-6-1z"/>
    <path d="M2322 501v21h19l-8-7c16-14 30 2 27 16-3 12-20 17-30 3l-7 3c10 21 38 17 45-4 5-22-20-42-41-24z" stroke="#aaa"/>
    <path d="M2394 501h16l-5 5 5 5-4 4-6-5-6 6zM2444 501h-16l5 5-5 5 4 4 6-5 6 6zM2394 550h16l-5-5 5-5-4-4-6 5-6-6zM2444 550h-16l5-5-5-5 4-4 6 5 6-6z"/>
  </g>
</svg>
      </div>
      <div class="vfoot"><span></span></div>
    </div>
  </section>

  <div class="right">
    <section class="panel shapes">
      <div class="ptitle"><span>Shapes</span><svg class="pi"><use href="#max"/></svg><svg class="pi"><use href="#pin"/></svg><svg class="pi"><use href="#cross"/></svg></div>
      <div class="stabs">
        <span class="on"><svg viewBox="0 0 32 30"><path d="M0 0h21v20H0z" fill="#444"/><circle cx="19" cy="18" r="12" fill="#bbb"/></svg>Plan Shapes</span>
        <span><svg viewBox="0 0 28 30"><path d="M14 0l13 8-13 7L1 8z" fill="#ccc"/><path d="M1 8l13 7v15L1 22z" fill="#929292"/><path d="M27 8l-13 7v15l13-8z" fill="#444"/></svg>BIM Shapes</span>
      </div>
      <div class="sbox">
        <div class="sr shead"><span>Description<svg viewBox="0 0 16 10"><path d="M0 10L8 0l8 10z" fill="#606060"/></svg></span><span>Quantity</span><span>Unit</span><span></span><span></span></div>
        <div class="sr s0"><span class="tr"><svg class="tog"><use href="#open"/></svg><b>2-Floor plan, page 1</b></span><i></i><i></i><i></i><i><svg class="ey"><use href="#eye"/></svg></i></div>
        <div class="sr s1"><span class="tr"><svg class="tog f"><use href="#fold"/></svg><span>Shape 1</span></span><i></i><i></i><i class="goto"><em><svg viewBox="0 0 26 22"><path d="M2 20C3 9 10 7 23 9M15 2l9 7-8 8" fill="none" stroke="#111" stroke-width="3"/></svg></em></i><i><svg class="ey"><use href="#shut"/></svg></i></div>
        <div class="sr s1"><span class="tr"><svg class="tog f"><use href="#fold"/></svg><span>Doors</span></span><i></i><i></i><i></i><i><svg class="ey"><use href="#shut"/></svg></i></div>
        <div class="sr s1"><span class="tr"><span>Windows</span></span><i></i><i></i><i></i><i></i></div>
        <div class="sr s1"><span class="tr"><span>Text</span></span><i></i><i></i><i></i><i></i></div>
      </div>
    </section>
    <section class="panel details">
      <div class="ptitle"><span>Details</span><svg class="pi"><use href="#max"/></svg><svg class="pi"><use href="#pin"/></svg><svg class="pi"><use href="#cross"/></svg></div>
      <div class="trade">Trade item: 2340x720x35mm Door</div>
      <div class="filter">
        <svg class="fi" viewBox="0 0 28 22"><path d="M0 2h28M4 11h20M9 20h11" stroke="#333" stroke-width="2.800"/></svg>
        <div class="all"><span>All</span><i><svg><use href="#drop"/></svg></i></div>
        <div class="search"></div>
        <svg class="clr" viewBox="0 0 24 22"><path d="M1 0l22 22M23 0L1 22" stroke="#333" stroke-width="2"/></svg>
      </div>
      <div class="dbody">
        <div class="dcol">
          <div class="gen"><span>General</span><svg><use href="#up"/></svg></div>
          <div class="dt">
            <div class="dh"><span>Property</span><span>Value</span></div>
            <div><span>Description</span><span class="code">2340x720x35mm Door</span></div>
            <div><span>Result Type</span><span class="lk">Door Counts</span></div>
            <div><span>Quantity</span><span class="lk">4</span></div>
            <div><span>Factor</span><span></span></div>
            <div><span>No.</span><span></span></div>
            <div><span>Conversion</span><span></span></div>
            <div><span>Wastage</span><span></span></div>
            <div class="agg"><span>Aggregate Quantity</span><span>4</span></div>
            <div><span>Unit</span><span>each</span></div>
          </div>
        </div>
        <div class="dscroll"><span class="btn"><svg><use href="#up"/></svg></span><span class="thumb"></span></div>
      </div>
    </section>
  </div>
</main>
</body>
</html>
```
FILE: styles.css
```css
* { box-sizing: border-box; }
html, body { margin: 0; height: 2016px; overflow: hidden; }
body {
  width: 3840px;
  display: flex;
  flex-direction: column;
  background: #efefef;
  color: #505050;
  font: 21px/26px "DejaVu Sans Condensed", "DejaVu Sans", "Noto Sans", sans-serif;
  font-stretch: condensed;
  letter-spacing: 0.2px;
}
i, em { font-style: normal; }
s { text-decoration: none; }
svg { display: block; flex: none; }
.defs { position: absolute; width: 0; height: 0; }
.code { letter-spacing: -0.25px; }

/* title bar */
.titlebar, .ribbon, .stabs, .insert { font-family: "Noto Sans", "Open Sans", sans-serif; font-stretch: normal; }
.titlebar { display: flex; flex: none; height: 130px; background: #0072c6; color: #fff; font-size: 23px; letter-spacing: -0.35px; }
.bar-left { width: 738px; }
.qat { display: flex; align-items: center; height: 60px; padding-left: 14px; margin-bottom: 24px; }
.logo { width: 42px; height: 38px; margin-right: 34px; }
.q { width: 32px; height: 32px; margin-right: 20px; }
.qsep { width: 2px; height: 32px; background: #4d9cd6; margin-right: 9px; }
.active { width: 54px; height: 48px; background: #00508a; display: flex; align-items: center; justify-content: center; margin-right: 10px; }
.active svg { width: 32px; height: 32px; }
.q + .qdrop { margin-left: -14px; }
.qdrop { width: 12px; height: 12px; margin-right: 20px; }
.qdrop + .qsep, .cubes + .qsep { margin-right: 19px; }
.undo { width: 28px; margin-right: 8px; }
.redo { width: 28px; margin-right: 22px; }
.menu { display: grid; grid-template-columns: 75px 105px 95px 91px 89px 186px 74px; padding-left: 23px; line-height: 42px; }
.context { width: 118px; text-align: center; }
.context span { display: block; }
.ctx-name { height: 84px; line-height: 84px; background: #ff9900; }
.ctx-tab { height: 46px; line-height: 42px; background: #f0f0f0; color: #222; }
.winctl { margin-left: auto; display: flex; gap: 71px; padding: 21px 36px 0 0; }
.winctl svg { width: 22px; height: 22px; }

/* ribbon */
.ribbon { display: flex; flex: none; height: 200px; background: #f0f0f0; border-bottom: 2px solid #c4c4c4; color: #222; padding-top: 14px; font-size: 21px; letter-spacing: -0.35px; line-height: 30px; }
.group { height: 166px; border-right: 2px solid #d4d4d4; display: flex; flex-direction: column; }
.g1 { width: 198px; } .g2 { width: 394px; } .g3 { width: 331px; }
.tools { display: flex; height: 137px; padding-top: 7px; }
.caption { text-align: center; line-height: 33px; }
.big { width: 88px; text-align: center; }
.big svg { width: 60px; height: 56px; margin: 0 auto 10px; overflow: visible; }
.big span { display: block; }
.g1 .tools { padding-left: 6px; }
.g2 .tools { padding-left: 12px; } .g2 .big { width: 98px; }
.g2 .big + .big { width: 88px; }
.g3 .tools { padding-left: 14px; } .g3 .big { width: 128px; }
.g3 .big + .big { width: 98px; }
.g3 .big + .big + .big { width: 76px; }
.g3 .big + .big + .big svg { margin-left: 8px; }
.smalls { width: 172px; margin: -5px 0 0 6px; }
.smalls div { display: flex; align-items: center; height: 40px; }
.smalls svg { width: 30px; height: 30px; margin-right: 10px; }
.smalls span { flex: 1; }
.smalls .dd { width: 12px; height: 7px; margin: 0 5px 0 0; }

/* formula bar */
.formula { display: flex; align-items: center; flex: none; height: 40px; padding-left: 61px; }
.f-item { width: 108px; }
.f-copy { width: 30px; height: 30px; margin-right: 112px; }
.f-ref { width: 248px; }
.fx { width: 36px; font: italic 29px/36px "Liberation Serif", serif; color: #777; }
.f-btn { width: 50px; height: 38px; border: 2px solid #fff; border-right-color: #777; border-bottom-color: #777; background: #e6e6e6; display: flex; align-items: center; justify-content: center; }
.f-btn svg { width: 22px; height: 20px; }
.f-in { flex: 1; height: 38px; line-height: 40px; background: #fff; padding-left: 7px; }

/* work area */
.work { display: flex; flex: 1; min-height: 0; padding: 2px 4px 0; gap: 7px; }
.panel { border: 2px solid #b6b6b6; display: flex; flex-direction: column; }
.estimate { width: 1470px; border-bottom: 0; padding: 0 3px; }
.ptitle { display: flex; align-items: center; height: 71px; flex: none; font-size: 26px; letter-spacing: 0; padding-left: 22px; padding-bottom: 3px; }
.ptitle span { flex: 1; }
.pi { width: 18px; height: 20px; }
.estimate .pi { margin-right: 22px; }
.etabs { display: flex; height: 53px; border-bottom: 2px solid #b0b0b0; line-height: 54px; padding-left: 5px; }
.etabs span { padding: 0 9px; width: 108px; white-space: nowrap; }
.etabs .on { background: #d8d8d8; color: #333; letter-spacing: -0.1px; }
.etools { display: flex; align-items: center; gap: 20px; height: 57px; padding: 0 0 2px 11px; }
.etools svg { width: 32px; height: 32px; }
.etools .sep { width: 2px; height: 44px; background: #cfcfcf; margin: 0 -5px 0 -3px; }
.etools .arr { width: 16px; height: 10px; margin: 0 3px 0 1px; }
.etools .arr.tight { margin: 0 -3px 0 -3px; }
.etools .sel { background: #c0c0c0; box-shadow: 0 0 0 8px #c0c0c0; }
.etools .lock { width: 25px; }

.ebox { border: 2px solid #c2c2c2; height: 905px; flex: none; display: flex; flex-direction: column; padding: 2px 0 0 1px; }
.egrid { display: flex; height: 796px; overflow: hidden; background: #fff; }
.rows { width: 1420px; flex: none; }
.er { display: grid; grid-template-columns: 60px 556px 130px 40px 120px 80px 120px 80px 120px 74px 40px; height: 38px; }
.er > * { border-right: 2px solid #d6d6d6; border-bottom: 2px solid #dcdcdc; display: flex; align-items: center; padding-bottom: 1px; white-space: nowrap; }
.er > :nth-child(10) { border-right-color: #a6a6a6; }
.head { height: 40px; background: #efefef; }
.head > * { border-color: #b0b0b0; padding-left: 7px; letter-spacing: 0; }
.head .cut { overflow: hidden; }
.er .no { background: #efefef; border-right-color: #b0b0b0; border-bottom: 0; padding: 5px 0 0 16px; letter-spacing: 1px; }
.no s { width: 28px; overflow: hidden; }
.no .ul { border-bottom: 2px solid #555; line-height: 24px; }
.er .desc { border: 0; padding: 0; align-items: stretch; justify-content: flex-end; background: #fff; }
.nm { flex: none; border: 2px solid #d6d6d6; border-width: 0 2px 2px; display: flex; align-items: center; padding: 0 0 4px 9px; }
b.nm { letter-spacing: 0; }
b.nm.caps { letter-spacing: 0.3px; }
.l0 .nm { width: 528px; } .l1 .nm { width: 500px; } .l2 .nm { width: 472px; }
.tog { width: 12px; height: 13px; margin: 13px 6px 0 0; }
.job { justify-content: flex-end; padding-right: 6px; letter-spacing: 0.3px; }
.job svg { width: 26px; height: 24px; margin-right: 14px; }
.n { justify-content: flex-end; padding-right: 7px; }
.u { padding-left: 8px; }
.lk { color: #2020ff; }
.er i { justify-content: center; }
.ty { width: 28px; height: 22px; margin-top: 2px; }
.vol { width: 30px; height: 30px; margin-top: -8px; }
.ey { width: 31px; height: 21px; }
.pink > *, .pink .nm { background: #ff8fff; color: #fff; border-bottom-color: #d9a8d9; }
.blue > *, .blue .nm { background: #69aadd; color: #f2f8fd; }
.pink .no, .blue .no { background: #efefef; color: #444; }
.er.pink .desc, .er.blue .desc { background: #fff; }
.sky > *, .sky .nm { background: #dcf0ff; }
.sky .no { background: #efefef; }
.er.sky .desc { background: #fff; }
.er.sky .white { background: #fff; }
.green > *, .green .nm { background: #dfffdf; border-color: #c2e2c2; color: #4d704d; }
.er.green .no { background: #efefef; color: #505050; border-color: #b0b0b0; }
.er.green .desc { background: #fff; }
.green .lk { color: #2a3ce0; }
.green > :nth-child(4) { background: #fff; }
.tall { height: 114px; }
.tall .nm { line-height: 26px; padding-bottom: 2px; letter-spacing: -0.05px; }
.last { height: 34px; }
.last > *, .last .nm { border-bottom: 0; }
.caret { width: 30px; height: 28px; border-left: 2px solid #000; background: linear-gradient(#f55ef5, #f55ef5) no-repeat 0 0 / 28px 20px; margin: 2px 4px 0 0; }
.tick { width: 30px; height: 31px; margin: 4px 9px -2px -5px; }

.vscroll { flex: 1; display: flex; flex-direction: column; padding-top: 40px; background: #efefef; }
.vscroll .btn { height: 34px; display: flex; align-items: center; justify-content: center; background: #e9e9e9; }
.vscroll svg, .dscroll svg { width: 16px; height: 13px; }
.vscroll .thumb { height: 645px; background: #cdcdcd; }
.vscroll .rest { flex: 1; display: flex; align-items: flex-end; justify-content: center; padding-bottom: 12px; background: #ececec; }
.hscroll { display: flex; height: 34px; border-bottom: 2px solid #c2c2c2; flex: none; }
.hscroll .btn { width: 34px; display: flex; align-items: center; justify-content: center; background: #f2f2f2; }
.hscroll svg { width: 13px; height: 17px; }
.hscroll .thumb { width: 1156px; background: #cdcdcd; }
.hscroll .rest { width: 229px; background: #ebebeb; display: flex; align-items: center; justify-content: flex-end; padding-right: 10px; }
.crumbs { display: flex; align-items: center; flex: 1; padding: 0 15px 0 14px; }
.burger { width: 32px; height: 22px; margin-right: 18px; }
.cr { width: 10px; height: 17px; }
.c1 { width: 80px; margin-left: 22px; }
.c2 { margin-left: 24px; flex: 1; }
.tl { color: #222; margin-right: 28px; }
.crumbs b { color: #000; letter-spacing: 0.5px; }
.splitter { height: 27px; flex: none; display: flex; justify-content: center; align-items: center; padding: 0 3px 4px 0; }
.splitter svg { width: 16px; height: 14px; }

.ctabs { display: flex; height: 51px; flex: none; letter-spacing: -0.05px; }
.ctabs span { display: flex; align-items: center; }
.ctabs .on { width: 252px; border: 2px solid #c2c2c2; border-bottom: 0; padding-left: 21px; color: #333; }
.ctabs .on svg { width: 31px; height: 26px; margin-right: 6px; }
.ctabs .off { flex: 1; border-bottom: 2px solid #c2c2c2; padding-left: 20px; }
.ctabs .off svg { width: 32px; height: 28px; margin-right: 4px; }
.ctabs .off .lay { width: 28px; height: 24px; margin: -14px 5px 0 auto; }
.cbox { flex: 1; border: 2px solid #c2c2c2; border-width: 0 2px; display: flex; flex-direction: column; }
.ctools { display: flex; gap: 20px; height: 57px; border-bottom: 3px solid #b0b0b0; padding: 10px 0 0 13px; flex: none; }
.ctools svg { width: 32px; height: 32px; }
.cr-row { display: grid; grid-template-columns: 39px 962px 80px 130px 40px 165px 1fr; height: 38px; flex: none; background: #fff; }
.cr-row > * { border-right: 2px solid #d6d6d6; border-bottom: 2px solid #dcdcdc; display: flex; align-items: center; justify-content: flex-end; padding: 2px 7px 0 0; }
.cr-row > :nth-child(6) { border-right: 4px solid #a6a6a6; }
.chead { height: 40px; background: #efefef; }
.chead > * { border-color: #b0b0b0; justify-content: flex-start; padding: 0 0 0 7px; letter-spacing: 0; }
.cr-row .mid, .cr-row .ec { justify-content: center; padding: 0; }
.cr-row .ec svg { margin-top: 4px; }
.mid em { width: 26px; height: 26px; border: 2px solid #c2c2c2; }
.cr-row .lead { background: #efefef; border-color: #b0b0b0; border-bottom: 0; justify-content: center; padding: 0; }
.lead svg { width: 8px; height: 16px; }
.cr-row .d { border-bottom: 0; padding: 0; align-items: stretch; letter-spacing: -0.25px; }
.d span { width: 931px; border: 2px solid #dcdcdc; border-width: 0 0 2px 2px; display: flex; align-items: center; padding: 0 0 3px 9px; }
.blank { flex: 1; background: #fff; }

/* viewport */
.viewport { width: 1442px; display: flex; flex-direction: column; padding-top: 4px; }
.vtabs { height: 45px; border-bottom: 4px solid #666; flex: none; }
.vtabs span { display: block; width: 132px; height: 42px; line-height: 43px; background: #666; color: #f0f0f0; padding-left: 24px; letter-spacing: -0.05px; }
.vbody { flex: 1; border: 2px solid #b6b6b6; border-width: 0 2px; padding: 8px 7px 0; display: flex; flex-direction: column; min-height: 0; }
.vbar { display: flex; height: 39px; margin-bottom: 14px; justify-content: space-between; flex: none; }
.combo { width: 1262px; border: 2px solid #b8b8b8; background: #fff; display: flex; line-height: 36px; letter-spacing: 0.2px; }
.combo span { flex: 1; padding-left: 6px; }
.combo i, .all i { width: 30px; border-left: 2px solid #b8b8b8; background: #efefef; display: flex; align-items: center; justify-content: center; }
.combo svg, .all svg { width: 14px; height: 9px; }
.insert { width: 149px; border: 2px solid #c2c2c2; display: flex; align-items: center; padding-left: 12px; gap: 21px; color: #222; letter-spacing: -0.2px; }
.insert svg { width: 26px; height: 26px; }
.canvas { height: 1522px; flex: none; border: 2px solid #8e8e8e; background: #fff; }
.plan { width: 1420px; height: 1518px; }
.vfoot span { display: block; width: 278px; height: 20px; border-right: 2px solid #b8b8b8; }
.ink { fill: none; stroke: #4a4a4a; stroke-width: 2.2px; }
.ink * { vector-effect: non-scaling-stroke; }
.ink .thin { stroke-width: 1.7px; }
.ink .dash { stroke-dasharray: 17 9; }
.ink .thin.dash { stroke-dasharray: 14 6; }
.ink .dash2 { stroke-dasharray: 4 3; }
.ink .wall { stroke: #3c3c3c; stroke-width: 4px; }
.ink .fine { stroke: #6a5444; stroke-width: 4px; stroke-dasharray: 2 5 3 4; }
.ink .round { stroke-width: 5px; stroke-dasharray: 14 12; }
.plan text { letter-spacing: 0; stroke: none; }
.room text { font: 16.5px "Liberation Sans", sans-serif; fill: #7a5638; text-anchor: middle; }
.plan .room text { stroke: #7a5638; stroke-width: 0.3px; }
.room .tiny { font-size: 12px; }
.plan .room .dk { fill: #444; stroke: #444; }
.dim text { font: 15.5px "Liberation Sans", sans-serif; fill: #333; text-anchor: middle; }
.plan .dim text { letter-spacing: -0.8px; stroke: #333; stroke-width: 0.6px; }
.fp { font: 300 50px Lato, "Open Sans", sans-serif; fill: #444; }
.note text { font: 10px "Liberation Sans", sans-serif; fill: #444; }
.note path { stroke: #555; stroke-width: 2.4px; }
.note .h { font-size: 13px; }
.note .m { font-size: 17px; font-family: "Open Sans", sans-serif; font-weight: 300; }
.note .l { font: 300 20px "Open Sans", sans-serif; fill: #333; }
.note .it { font-style: italic; font-size: 19px; }
.bda { font: bold 22px "Liberation Sans", sans-serif; fill: #fff; }
.mem { font: bold 12px "Liberation Sans", sans-serif; fill: #333; }
.ax { font: 300 25px "Open Sans", sans-serif; fill: #222; }

/* right column */
.right { width: 906px; display: flex; flex-direction: column; gap: 9px; }
.shapes { height: 1038px; flex: none; padding: 0 3px 3px; }
.right .ptitle { padding-right: 22px; padding-left: 21px; gap: 20px; }
.stabs { display: flex; height: 56px; padding-top: 11px; flex: none; font-size: 22px; letter-spacing: -0.5px; color: #222; }
.stabs span { display: flex; align-items: center; padding: 0 0 2px 13px; gap: 6px; }
.stabs .on { width: 194px; padding-left: 9px; gap: 5px; border: 2px solid #c2c2c2; border-bottom: 0; }
.stabs svg { width: 32px; height: 30px; }
.stabs span + span svg { width: 28px; }
.sbox { flex: 1; border: 2px solid #b0b0b0; background: #fff; }
.sr { display: grid; grid-template-columns: 626px 104px 58px 44px 1fr; height: 38px; }
.sr > * { border-right: 2px solid #d6d6d6; border-bottom: 2px solid #dcdcdc; display: flex; align-items: center; justify-content: center; }
.sr > :nth-child(4) { border-right: 4px solid #a6a6a6; }
.sr > :last-child { border-right: 0; }
.shead { height: 39px; background: #efefef; letter-spacing: 0; }
.shead > * { border-color: #b0b0b0; justify-content: flex-start; padding-left: 5px; }
.shead svg { width: 16px; height: 10px; margin: 0 9px 0 auto; }
.sr .tr { border-bottom: 0; align-items: stretch; justify-content: flex-end; }
.tr b, .tr span { border: 2px solid #dcdcdc; border-width: 0 0 2px 2px; padding-left: 6px; line-height: 35px; }
.tr b { width: 596px; padding-left: 8px; letter-spacing: 0.4px; } .tr span { width: 568px; }
.sr .tog.f { width: 8px; height: 16px; margin: 12px 9px 0 0; }
.sr .ey { margin-right: -1px; }
.sr .goto { padding: 0; align-items: stretch; border-bottom: 0; }
.goto em { flex: 1; margin: 1px 1px 1px 2px; border: 2px solid #aaa; background: #e9e9e9; display: flex; align-items: center; justify-content: center; }
.goto svg { width: 26px; height: 22px; }

.details { flex: 1; border-bottom: 0; min-height: 0; overflow: hidden; padding-left: 3px; }
.trade { height: 32px; line-height: 35px; padding-left: 2px; margin-top: 3px; flex: none; letter-spacing: -0.1px; }
.filter { display: flex; height: 40px; flex: none; padding-left: 7px; }
.fi { width: 28px; height: 21px; margin: 6px 13px 0 0; }
.all { width: 201px; border: 2px solid #b0b0b0; display: flex; line-height: 36px; margin-right: 11px; }
.all span { flex: 1; padding-left: 6px; }
.all i { width: 32px; }
.search { width: 583px; border: 2px solid #b0b0b0; background: #fff; margin-right: 19px; }
.clr { width: 23px; height: 22px; margin-top: 9px; }
.dbody { display: flex; flex: 1; min-height: 0; justify-content: space-between; padding-top: 5px; }
.dcol { width: 862px; padding-left: 7px; }
.gen { display: flex; justify-content: space-between; align-items: center; height: 70px; font-size: 26px; letter-spacing: 0; padding: 0 22px 3px 3px; }
.gen svg { width: 19px; height: 16px; }
.dt { width: 848px; border: 2px solid #b0b0b0; }
.dt div { display: grid; grid-template-columns: 420px 1fr; height: 40.1px; background: #fff; color: #404040; }
.dt span { border-bottom: 2px solid #dcdcdc; padding-left: 6px; line-height: 36px; }
.dt span + span { border-left: 2px solid #dcdcdc; padding-left: 7px; }
.dt .dh { background: #efefef; height: 39px; color: #555; }
.dt .dh span { border-color: #b0b0b0; }
.dt .lk { color: #1010ff; line-height: 43px; height: 40.1px; }
.dt .agg { color: #909090; font-style: italic; }
.dscroll { width: 35px; background: #e8e8e8; }
.dscroll span { display: block; }
.dscroll .btn { height: 34px; display: flex; align-items: center; justify-content: center; }
.dscroll .thumb { height: 164px; background: #cdcdcd; }
```
